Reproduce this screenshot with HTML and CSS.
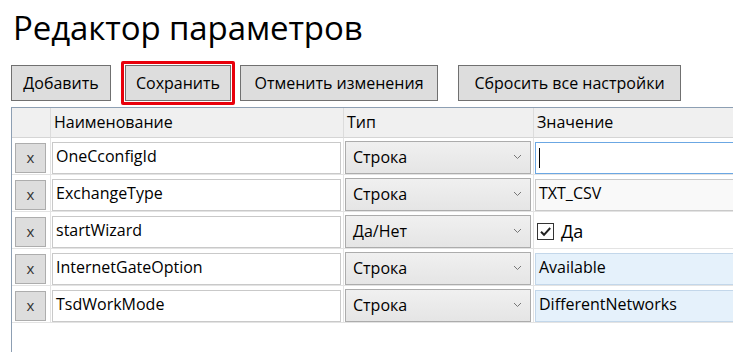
FILE: index.html
```html
<!DOCTYPE html>
<html lang="ru">
<head>
  <meta charset="UTF-8">
  <title>Редактор параметров</title>
  <link rel="stylesheet" href="styles.css">
</head>
<body>
  <div class="page">
    <h1>Редактор параметров</h1>

    <div class="toolbar">
      <button class="btn w1">Добавить</button>
      <span class="hl"><button class="btn w2">Сохранить</button></span>
      <button class="btn w3">Отменить изменения</button>
      <button class="btn w4">Сбросить все настройки</button>
    </div>

    <div class="grid">
      <div class="head"></div>
      <div class="head">Наименование</div>
      <div class="head">Тип</div>
      <div class="head">Значение</div>

      <!-- row 1 -->
      <div class="cell del"><button class="x">x</button></div>
      <div class="cell"><div class="tb">OneCconfigId</div></div>
      <div class="cell"><div class="cb">Строка<svg width="9" height="6" viewBox="0 0 9 6"><path d="M1 1l3.5 3.5L8 1" fill="none" stroke="#777" stroke-width="1"/></svg></div></div>
      <div class="cell"><div class="tb focus"><span class="caret"></span></div></div>

      <!-- row 2 -->
      <div class="cell del"><button class="x">x</button></div>
      <div class="cell"><div class="tb">ExchangeType</div></div>
      <div class="cell"><div class="cb">Строка<svg width="9" height="6" viewBox="0 0 9 6"><path d="M1 1l3.5 3.5L8 1" fill="none" stroke="#777" stroke-width="1"/></svg></div></div>
      <div class="cell"><div class="tb plain">TXT_CSV</div></div>

      <!-- row 3 -->
      <div class="cell del"><button class="x">x</button></div>
      <div class="cell"><div class="tb">startWizard</div></div>
      <div class="cell"><div class="cb">Да/Нет<svg width="9" height="6" viewBox="0 0 9 6"><path d="M1 1l3.5 3.5L8 1" fill="none" stroke="#777" stroke-width="1"/></svg></div></div>
      <div class="cell"><label class="check"><span class="box"><svg width="15" height="15" viewBox="0 0 15 15"><path d="M3 7.8l3 3L12.2 4" fill="none" stroke="#222" stroke-width="2"/></svg></span>Да</label></div>

      <!-- row 4 -->
      <div class="cell del"><button class="x">x</button></div>
      <div class="cell"><div class="tb">InternetGateOption</div></div>
      <div class="cell"><div class="cb">Строка<svg width="9" height="6" viewBox="0 0 9 6"><path d="M1 1l3.5 3.5L8 1" fill="none" stroke="#777" stroke-width="1"/></svg></div></div>
      <div class="cell"><div class="tb hover">Available</div></div>

      <!-- row 5 -->
      <div class="cell del"><button class="x">x</button></div>
      <div class="cell"><div class="tb">TsdWorkMode</div></div>
      <div class="cell"><div class="cb">Строка<svg width="9" height="6" viewBox="0 0 9 6"><path d="M1 1l3.5 3.5L8 1" fill="none" stroke="#777" stroke-width="1"/></svg></div></div>
      <div class="cell"><div class="tb hover">DifferentNetworks</div></div>
    </div>
  </div>
</body>
</html>
```

FILE: styles.css
```css
body {
  margin: 0;
  font-family: "Open Sans", "Noto Sans", sans-serif;
  color: #000;
  background: #fff;
  overflow: hidden;
}

.page {
  padding: 0 0 0 11px;
  height: 352px;
}

h1 {
  margin: 0;
  padding: 7px 0 0 2px;
  height: 59px;
  box-sizing: border-box;
  font-size: 33px;
  font-weight: 400;
  letter-spacing: -0.1px;
  line-height: 42px;
}

.toolbar {
  display: flex;
  align-items: center;
  height: 48px;
}

.btn {
  height: 36px;
  padding: 0;
  font-family: inherit;
  font-size: 16px;
  color: #000;
  background: #dddddd;
  border: 1px solid #707070;
  border-radius: 0;
  text-align: center;
}

.w1 { width: 100px; }
.w2 { width: 106px; }
.w3 { width: 198px; margin-left: 5px; }
.w4 { width: 223px; margin-left: 20px; }

.hl {
  display: flex;
  padding: 1px;
  border: 3px solid #e8000b;
  border-radius: 2px;
  margin-left: 10px;
}

.hl .btn {
  height: 36px;
}

.grid {
  display: grid;
  grid-template-columns: 39px 293px 190px 300px;
  grid-template-rows: 30px repeat(5, 37px);
  width: 823px;
  height: 247px;
  border: 1px solid #8d9fb3;
  border-right: none;
  align-content: start;
}

.head {
  background: #f0f0f0;
  border-right: 1px solid #dcdcdc;
  border-bottom: 1px solid #d5d5d5;
  font-size: 16px;
  line-height: 29px;
  padding-left: 3px;
}

.cell {
  border-right: 1px solid #e3e3e3;
  border-bottom: 1px solid #e3e3e3;
  padding: 4px 2px 0 1px;
  box-sizing: border-box;
  font-size: 16px;
}

.cell.del {
  padding: 5px 0 0 3px;
}

.x {
  width: 31px;
  height: 30px;
  background: #dddddd;
  border: 1px solid #adadad;
  font-family: inherit;
  font-size: 15px;
  color: #333;
  padding: 0 0 3px;
}

.tb {
  height: 32px;
  box-sizing: border-box;
  border: 1px solid #c9c9c9;
  background: #fff;
  padding: 0 3px;
  line-height: 27px;
  white-space: nowrap;
}

.tb.focus {
  border-color: #6ba7e3;
}

.tb.plain {
  background: #f9f9f9;
}

.tb.hover {
  background: #e5f1fb;
  border-color: #c3d7ea;
}

.caret {
  display: inline-block;
  width: 1px;
  height: 20px;
  background: #000;
  vertical-align: middle;
}

.cb {
  height: 33px;
  box-sizing: border-box;
  border: 1px solid #acacac;
  background: linear-gradient(#f0f0f0, #e5e5e5);
  display: flex;
  align-items: center;
  justify-content: space-between;
  padding: 0 8px 2px 7px;
  margin-top: -1px;
}

.check {
  display: flex;
  align-items: center;
  gap: 7px;
  font-size: 18px;
  padding: 3px 0 0 2px;
}

.box {
  width: 15px;
  height: 15px;
  border: 1px solid #333;
  display: flex;
  background: #fff;
}
```
